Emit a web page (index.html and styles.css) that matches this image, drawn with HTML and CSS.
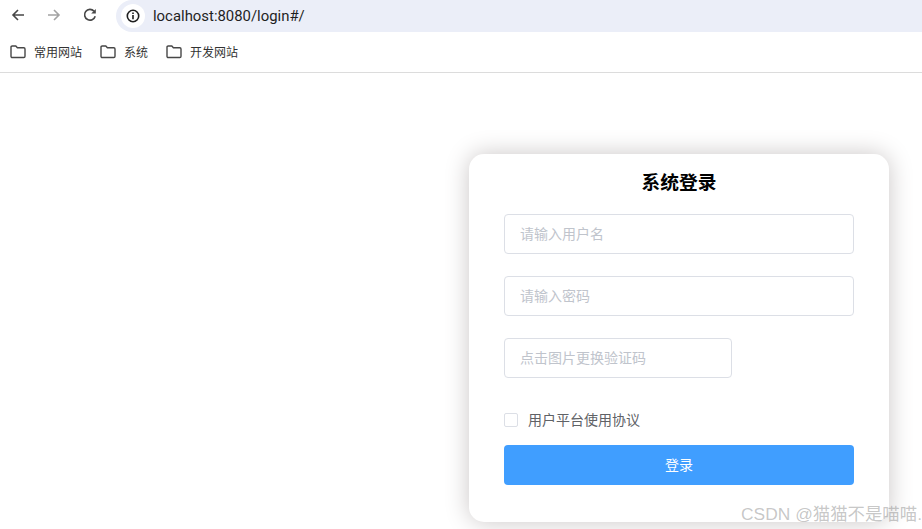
FILE: index.html
```html
<!DOCTYPE html>
<html lang="zh-CN">
<head>
<meta charset="utf-8">
<title>系统登录</title>
<link rel="stylesheet" href="styles.css">
</head>
<body>
<header class="chrome">
  <div class="toolbar">
    <div class="nav">
      <svg class="nav-icon" viewBox="0 0 16 16"><path d="M14 8H3M8 3 3 8l5 5" fill="none" stroke="#474747" stroke-width="1.6"/></svg>
      <svg class="nav-icon" viewBox="0 0 16 16"><path d="M2 8h11M8 3l5 5-5 5" fill="none" stroke="#a3a3a3" stroke-width="1.6"/></svg>
      <svg class="nav-icon" viewBox="0 0 16 16"><path d="M13.2 9.2A5.4 5.4 0 1 1 12 4.1" fill="none" stroke="#474747" stroke-width="1.6"/><path d="M13.8 2v4.6H9.2z" fill="#474747"/></svg>
    </div>
    <div class="omnibox">
      <span class="info-chip">
        <svg class="info-icon" viewBox="0 0 14 14"><circle cx="7" cy="7" r="5.7" fill="none" stroke="#1f1f1f" stroke-width="1.6"/><path d="M6.2 6h1.6v4.2H6.2zM6.2 3.6h1.6v1.5H6.2z" fill="#1f1f1f"/></svg>
      </span>
      <span class="url">localhost:8080/login#/</span>
    </div>
  </div>
  <nav class="bookmarks">
    <span class="bookmark"><svg class="folder" viewBox="0 0 16 14"><path d="M1 2.2C1 1.5 1.5 1 2.2 1h3.6l1.6 1.8h6.4c.7 0 1.2.5 1.2 1.2v7.3c0 .7-.5 1.2-1.2 1.2H2.2c-.7 0-1.2-.5-1.2-1.2z" fill="none" stroke="#474747" stroke-width="1.4"/></svg>常用网站</span>
    <span class="bookmark"><svg class="folder" viewBox="0 0 16 14"><path d="M1 2.2C1 1.5 1.5 1 2.2 1h3.6l1.6 1.8h6.4c.7 0 1.2.5 1.2 1.2v7.3c0 .7-.5 1.2-1.2 1.2H2.2c-.7 0-1.2-.5-1.2-1.2z" fill="none" stroke="#474747" stroke-width="1.4"/></svg>系统</span>
    <span class="bookmark"><svg class="folder" viewBox="0 0 16 14"><path d="M1 2.2C1 1.5 1.5 1 2.2 1h3.6l1.6 1.8h6.4c.7 0 1.2.5 1.2 1.2v7.3c0 .7-.5 1.2-1.2 1.2H2.2c-.7 0-1.2-.5-1.2-1.2z" fill="none" stroke="#474747" stroke-width="1.4"/></svg>开发网站</span>
  </nav>
</header>
<main class="page">
  <form class="card">
    <h3 class="title">系统登录</h3>
    <input class="field" type="text" placeholder="请输入用户名">
    <input class="field" type="password" placeholder="请输入密码">
    <input class="field field-short" type="text" placeholder="点击图片更换验证码">
    <label class="agree"><span class="check"></span><span class="agree-text">用户平台使用协议</span></label>
    <button class="submit" type="button"><span class="submit-text">登录</span></button>
  </form>
</main>
<div class="watermark">CSDN @猫猫不是喵喵.</div>
</body>
</html>
```
FILE: styles.css
```css
* { box-sizing: border-box; }
html, body { margin: 0; height: 100%; overflow: hidden; background: #fff; }
body { font-family: "Liberation Sans", "Noto Sans CJK SC", sans-serif; position: relative; }

.chrome { height: 73px; border-bottom: 1px solid #dcdcdc; }
.toolbar { display: flex; height: 32px; }
.nav { display: flex; width: 116px; padding-left: 10px; gap: 20px; align-items: center; height: 30px; }
.nav-icon { width: 16px; height: 16px; flex: none; }
.omnibox { flex: 1; display: flex; align-items: center; background: #ebeef8; border-radius: 16px 0 0 16px; padding-left: 5px; }
.info-chip { width: 24px; height: 24px; border-radius: 50%; background: #fff; display: flex; align-items: center; justify-content: center; }
.info-icon { width: 14px; height: 14px; }
.url { margin-left: 8px; font-family: Roboto, "Liberation Sans", sans-serif; font-size: 14.9px; color: #1f1f1f; }

.bookmarks { display: flex; height: 40px; align-items: center; padding-left: 10px; gap: 18px; padding-bottom: 1px; font-size: 12px; color: #333; }
.bookmark { display: flex; align-items: center; gap: 8px; }
.folder { width: 16px; height: 14px; }

.page { display: flex; justify-content: flex-end; padding: 81px 33px 0 0; }
.card { width: 420px; height: 368px; background: #fff; border-radius: 15px; padding: 17px 35px 0; box-shadow: 0 0 25px #cac6c6; display: flex; flex-direction: column; align-items: flex-start; }
.title { margin: 0 0 20px; width: 100%; height: 23px; line-height: 23px; text-align: center; font-size: 18.72px; font-weight: 700; color: #000; }
.field { width: 350px; height: 40px; flex: none; margin-bottom: 22px; padding: 0 15px; border: 1px solid #dcdfe6; border-radius: 4px; outline: none; background: #fff; font: 14px "Liberation Sans", "Noto Sans CJK SC", sans-serif; color: #606266; }
.field::placeholder { color: #c0c4cc; opacity: 1; }
.field-short { width: 228px; margin-bottom: 35px; }
.agree { display: flex; align-items: center; height: 14px; gap: 10px; font-size: 14px; color: #606266; margin-bottom: 18px; }
.agree-text { margin-top: -2px; }
.check { width: 14px; height: 14px; border: 1px solid #dcdfe6; border-radius: 2px; background: #fff; }
.submit { width: 350px; height: 40px; border: 0; border-radius: 4px; padding: 0 0 2px; background: #409eff; color: #fff; font: 14px "Liberation Sans", "Noto Sans CJK SC", sans-serif; }

.watermark { position: absolute; right: 0; bottom: 5px; font-size: 17.4px; line-height: 20px; white-space: nowrap; color: rgba(130, 130, 130, .45); }
```
